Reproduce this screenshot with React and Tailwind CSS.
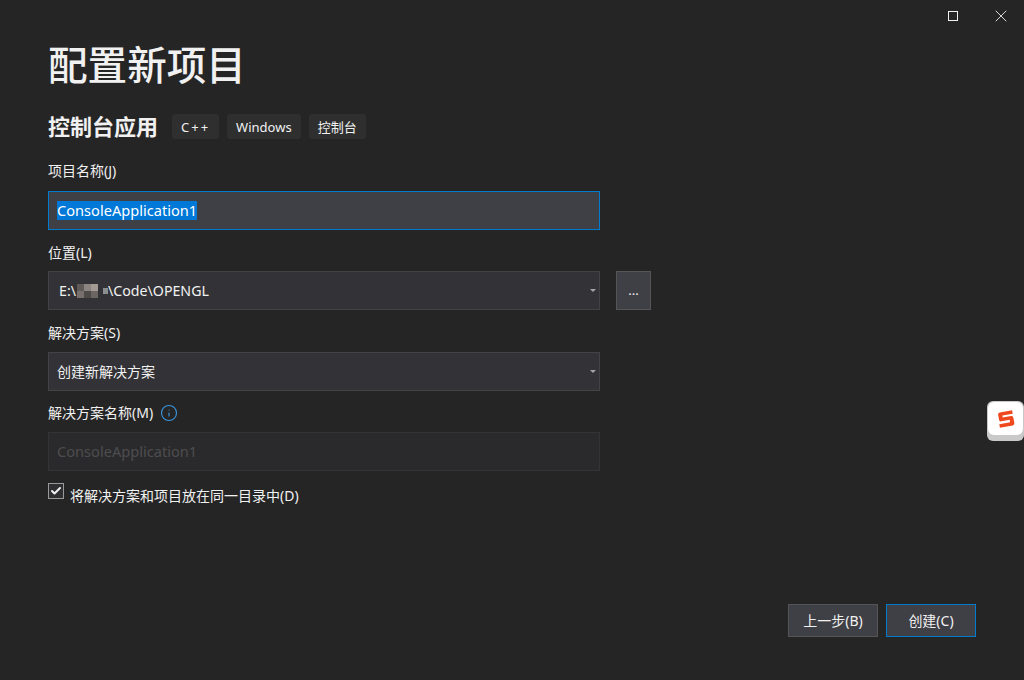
import { Check, Info, X } from "lucide-react";

const fontStack = "font-['Noto_Sans','Noto_Sans_CJK_SC',sans-serif]";

function Field({ label, children, className = "" }) {
  return (
    <div className={className}>
      <div className="flex h-[20px] items-center gap-[7px] text-[14px] leading-[20px] text-[#f1f1f1]">{label}</div>
      {children}
    </div>
  );
}

function Caret() {
  return <span className="ml-auto mr-[3px] h-0 w-0 border-x-[3.5px] border-t-[3.5px] border-x-transparent border-t-[#a5a5a5]" />;
}

function Mosaic() {
  const blocks = ["#5f5a58", "#8c8480", "#a39a94", "#77706c", "#4e4a48", "#6d6562"];
  return (
    <span className="ml-[1px] mr-[5px] grid w-[21px] grid-cols-3 grid-rows-2">
      {blocks.map((c, i) => (
        <span key={i} className="h-[7px]" style={{ backgroundColor: c }} />
      ))}
    </span>
  );
}

function Tag({ children, className = "" }) {
  return <span className={`flex h-[25px] items-center rounded-[3px] bg-[#2f2f30] px-[9px] pt-[3px] text-[13px] text-[#f1f1f1] ${className}`}>{children}</span>;
}

function SogouIcon() {
  return (
    <div className="absolute left-[987px] top-[401px] flex h-[40px] w-[37px] items-start justify-center rounded-[6px] bg-[#c9c9c9] pt-[1px]">
      <div className="flex h-[33px] w-[35px] items-center justify-center rounded-[6px] bg-white">
        <svg width="20" height="20" viewBox="0 0 20 20">
          <g transform="rotate(-10 10 10)">
            <path
              d="M3 4.5 Q3 2.5 5 2.5 L17.5 2.5 L17.5 6 L7 6 L7 8 L15.5 8 Q17.5 8 17.5 10 L17.5 15.5 Q17.5 17.5 15.5 17.5 L2.5 17.5 L2.5 14 L13.5 14 L13.5 11.5 L5 11.5 Q3 11.5 3 9.5 Z"
              fill="#f0481e"
            />
          </g>
        </svg>
      </div>
    </div>
  );
}

export default function App() {
  return (
    <div className={`relative flex h-[680px] w-[1024px] flex-col overflow-hidden bg-[#252526] ${fontStack}`}>
      <div className="flex h-[32px] shrink-0 items-center justify-end">
        <div className="flex w-[50px] justify-center">
          <span className="h-[10px] w-[10px] border border-[#f1f1f1]" />
        </div>
        <div className="flex w-[46px] justify-center">
          <X size={20} strokeWidth={1.2} className="text-[#d8d8d8]" />
        </div>
      </div>

      <div className="px-[48px]">
        <h1 className="mt-[6px] h-[54px] text-[39.6px] font-medium leading-[54px] text-[#f1f1f1]">配置新项目</h1>

        <div className="mt-[21px] flex h-[26px] items-center">
          <h2 className="w-[124px] text-[22px] font-semibold leading-[26px] text-[#f1f1f1]">控制台应用</h2>
          <div className="flex gap-[8px]">
            <Tag className="tracking-[2px]">C++</Tag>
            <Tag>Windows</Tag>
            <Tag>控制台</Tag>
          </div>
        </div>

        <Field label="项目名称(J)" className="mt-[22px]">
          <div className="mt-[10px] flex h-[39px] w-[552px] items-center border border-[#007acc] bg-[#3f3f46] px-[8px] text-[14.6px] text-white">
            <span className="bg-[#0078d7] leading-[19px]">ConsoleApplication1</span>
          </div>
        </Field>

        <Field label="位置(L)" className="mt-[13px]">
          <div className="mt-[8px] flex gap-[16px]">
            <div className="flex h-[39px] w-[552px] items-center border border-[#434346] bg-[#333337] pl-[10px] text-[14.2px] text-[#f1f1f1]">
              <span>E:\</span>
              <Mosaic />
              <span className="h-[6px] w-[5px] bg-[#8a9090]" />
              <span>\Code\OPENGL</span>
              <Caret />
            </div>
            <button className="flex h-[39px] w-[35px] items-center justify-center border border-[#555555] bg-[#3f3f46] text-[13px] text-[#f1f1f1]">
              ...
            </button>
          </div>
        </Field>

        <Field label="解决方案(S)" className="mt-[13px]">
          <div className="mt-[9px] flex h-[39px] w-[552px] items-center border border-[#434346] bg-[#333337] pl-[8px] text-[14px] text-[#f1f1f1]">
            <span>创建新解决方案</span>
            <Caret />
          </div>
        </Field>

        <Field
          label={
            <>
              <span>解决方案名称(M)</span>
              <Info size={18} strokeWidth={1.5} className="text-[#3a96dd]" />
            </>
          }
          className="mt-[12px]"
        >
          <div className="mt-[9px] flex h-[39px] w-[552px] items-center border border-[#343436] bg-[#2a2a2c] px-[8px] text-[14.6px] text-[#4d4d4f]">
            ConsoleApplication1
          </div>
        </Field>

        <div className="mt-[12px] flex items-start gap-[6px]">
          <span className="flex h-[16px] w-[16px] items-center justify-center border border-[#999999] bg-[#2f2f31]">
            <Check size={12} strokeWidth={4} className="text-[#f1f1f1]" />
          </span>
          <span className="mt-[3px] text-[14px] leading-[20px] text-[#f1f1f1]">将解决方案和项目放在同一目录中(D)</span>
        </div>
      </div>

      <div className="mb-[43px] mr-[48px] mt-auto flex justify-end gap-[8px] text-[14px] text-[#f1f1f1]">
        <button className="h-[33px] w-[90px] border border-[#555555] bg-[#3f3f46]">上一步(B)</button>
        <button className="h-[33px] w-[90px] border border-[#007acc] bg-[#3f3f46]">创建(C)</button>
      </div>

      <SogouIcon />
    </div>
  );
}
